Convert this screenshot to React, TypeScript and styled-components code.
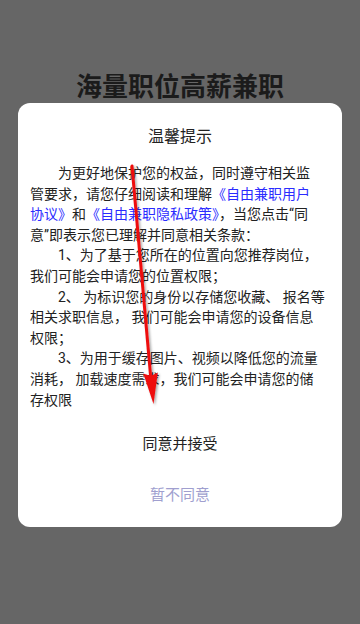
import React from "react";
import styled, { createGlobalStyle } from "styled-components";

const Global = createGlobalStyle`
  html, body {
    margin: 0;
    padding: 0;
    background: #666666;
    height: 100%;
  }
  body {
    font-family: Roboto, "Noto Sans CJK SC", sans-serif;
  }
  #root { min-height: 100%; }
`;

const Page = styled.div`
  position: relative;
  min-height: 624px;
  background: #666666;
  padding: 67px 18px 0;
  box-sizing: border-box;
  display: flex;
  flex-direction: column;
  align-items: stretch;
`;

const AppTitle = styled.h1`
  margin: 0;
  font-size: 26px;
  line-height: 36px;
  font-weight: 700;
  color: #1b1b1b;
  text-align: center;
  font-family: "Noto Sans CJK SC", sans-serif;
`;

const Card = styled.div`
  background: #ffffff;
  border-radius: 12px;
  padding: 21px 12px 12px;
  display: flex;
  flex-direction: column;
`;

const CardTitle = styled.h2`
  margin: 0;
  font-size: 16px;
  line-height: 22px;
  font-weight: 400;
  color: #222;
  text-align: center;
  font-family: "Noto Sans CJK SC", sans-serif;
`;

const Body = styled.div`
  margin-top: 17px;
  font-size: 14px;
  line-height: 20.6px;
  color: #222;
  white-space: nowrap;
`;

const Line = styled.div<{ $indent?: boolean }>`
  padding-left: ${(p) => (p.$indent ? "28px" : "0")};
`;

const Link = styled.span`
  color: #2b2bff;
`;

const Actions = styled.div`
  margin-top: 10px;
  display: flex;
  flex-direction: column;
  gap: 7px;
`;

const ActionButton = styled.button<{ $muted?: boolean }>`
  height: 44px;
  border: none;
  background: transparent;
  font-family: "Noto Sans CJK SC", sans-serif;
  font-size: 15px;
  color: ${(p) => (p.$muted ? "#a09fcf" : "#222")};
  padding: 0;
  cursor: pointer;
`;

const ArrowLayer = styled.svg`
  position: absolute;
  left: 0;
  top: 0;
  width: 360px;
  height: 624px;
  pointer-events: none;
`;

export default function App() {
  return (
    <>
      <Global />
      <Page>
        <AppTitle>海量职位高薪兼职</AppTitle>
        <Card>
          <CardTitle>温馨提示</CardTitle>
          <Body>
            <Line $indent>为更好地保护您的权益，同时遵守相关监</Line>
            <Line>
              管要求，请您仔细阅读和理解<Link>《自由兼职用户</Link>
            </Line>
            <Line>
              <Link>协议》</Link>和<Link>《自由兼职隐私政策》</Link>，当您点击“同
            </Line>
            <Line>意”即表示您已理解并同意相关条款：</Line>
            <Line $indent>1、为了基于您所在的位置向您推荐岗位，</Line>
            <Line>我们可能会申请您的位置权限；</Line>
            <Line $indent>2、 为标识您的身份以存储您收藏、 报名等</Line>
            <Line>相关求职信息， 我们可能会申请您的设备信息</Line>
            <Line>权限；</Line>
            <Line $indent>3、为用于缓存图片、视频以降低您的流量</Line>
            <Line>消耗， 加载速度需求，我们可能会申请您的储</Line>
            <Line>存权限</Line>
          </Body>
          <Actions>
            <ActionButton>同意并接受</ActionButton>
            <ActionButton $muted>暂不同意</ActionButton>
          </Actions>
        </Card>
        <ArrowLayer viewBox="0 0 360 624">
          <defs>
            <filter id="sh" x="-50%" y="-10%" width="200%" height="120%">
              <feDropShadow dx="1.5" dy="1.5" stdDeviation="1.2" floodColor="#000" floodOpacity="0.35" />
            </filter>
          </defs>
          <g filter="url(#sh)" fill="#ee1111" stroke="none">
            <line x1="132" y1="166" x2="150.6" y2="376" stroke="#ee1111" strokeWidth="3" strokeLinecap="round" />
            <polygon points="153.5,404 143.3,373.6 150.6,376 157.8,372.4" />
          </g>
        </ArrowLayer>
      </Page>
    </>
  );
}
